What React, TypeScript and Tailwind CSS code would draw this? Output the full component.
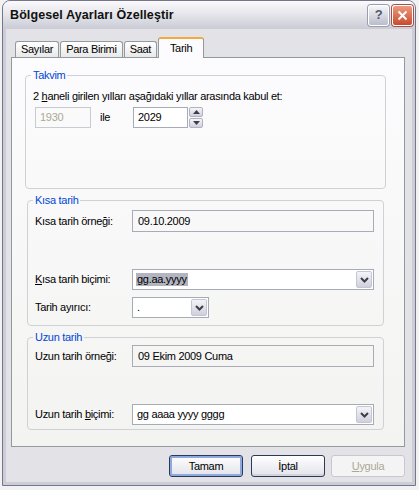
const tabs = ['Sayılar', 'Para Birimi', 'Saat'];

function Chevron() {
  return (
    <svg width="9" height="6" viewBox="0 0 9 6">
      <polyline points="1,1 4.5,4.5 8,1" fill="none" stroke="#3e3e4a" strokeWidth="2" />
    </svg>
  );
}

function Combo({ width, children }: { width: string; children: React.ReactNode }) {
  return (
    <div className={`${width} flex h-[21px] items-stretch border border-[#a5acb5] bg-white p-[1px]`}>
      <div className="flex flex-1 items-center pl-[2px]">{children}</div>
      <div className="flex w-[16px] items-center justify-center rounded-[2px] border border-[#c4c6d4] bg-gradient-to-b from-[#f4f4f8] to-[#cfd0dc]">
        <Chevron />
      </div>
    </div>
  );
}

function Group({ title, className, children }: { title: string; className: string; children: React.ReactNode }) {
  return (
    <fieldset className={`${className} rounded-[4px] border border-[#d0d0d6] px-[7px]`}>
      <legend className="ml-[-2px] px-[2px] leading-[13px] text-[#0046d5]">{title}</legend>
      {children}
    </fieldset>
  );
}

function Btn({ label, variant }: { label: React.ReactNode; variant: 'default' | 'normal' | 'disabled' }) {
  const cls =
    variant === 'disabled'
      ? 'border-[#c9c8ce] bg-[#f4f4f4] text-[#aca899]'
      : variant === 'default'
      ? 'border-[#2a3a58] bg-gradient-to-b from-[#ffffff] to-[#e2e3ea] text-black shadow-[inset_0_0_0_2px_#8fa8e0]'
      : 'border-[#2a3a58] bg-gradient-to-b from-[#ffffff] to-[#e2e3ea] text-black shadow-[inset_0_-2px_0_#d2d3dc]';
  return (
    <button className={`flex h-[22px] w-[74px] items-center justify-center rounded-[3px] border ${cls}`}>
      {label}
    </button>
  );
}

export default function App() {
  return (
    <div className="h-[490px] w-[419px] bg-[#f2f2f2] pl-[2px] font-['Liberation_Sans',Arial,sans-serif] text-[11px] tracking-[-0.3px] text-black">
      <div className="flex h-[486px] w-[414px] flex-col overflow-hidden rounded-t-[8px] border border-[#76768a] bg-[#cdcdd8]">
        {/* title bar */}
        <div className="flex h-[28px] items-center bg-gradient-to-b from-[#fbfbfd] via-[#e4e4ea] to-[#cbcbd6] pl-[7px] pr-[2px]">
          <span className="flex-1 text-[12.5px] font-bold tracking-[0.1px] text-[#111]">Bölgesel Ayarları Özelleştir</span>
          <div className="flex h-[21px] w-[21px] items-center justify-center rounded-[3px] border border-white bg-gradient-to-b from-[#f6f6fa] to-[#b9bccb] text-[13px] font-bold text-[#55586a] shadow-[0_0_0_1px_#9a9cb0]">
            ?
          </div>
          <div className="ml-[3px] flex h-[21px] w-[21px] items-center justify-center rounded-[3px] border border-white bg-gradient-to-b from-[#ec9a7e] to-[#c9482c] shadow-[0_0_0_1px_#a4504a]">
            <svg width="11" height="11" viewBox="0 0 11 11">
              <path d="M1.5 1.5 L9.5 9.5 M9.5 1.5 L1.5 9.5" stroke="white" strokeWidth="2" />
            </svg>
          </div>
        </div>

        {/* client */}
        <div className="mx-[3px] mb-[3px] flex-1 bg-[#e3e2e7] pt-[8px]">
          <div className="ml-[5px] w-[394px]">
            {/* tabs */}
            <div className="relative z-10 flex h-[20px] items-end pl-[4px]">
              {tabs.map((t) => (
                <div
                  key={t}
                  className="mr-[1px] flex h-[16px] items-center rounded-t-[3px] border border-b-0 border-[#919b9c] bg-gradient-to-b from-[#ffffff] to-[#e9e9ea] px-[5px]"
                >
                  {t}
                </div>
              ))}
              <div className="mb-[-1px] flex h-[21px] w-[46px] items-start justify-center rounded-t-[3px] border border-b-0 border-[#919b9c] border-t-[2px] border-t-[#f2aa3c] bg-[#fcfcfe] pt-[1px]">
                Tarih
              </div>
            </div>

            {/* panel */}
            <div className="h-[390px] border border-[#919b9c] bg-gradient-to-b from-[#fcfcfe] to-[#f3f3f1]">
              <Group title="Takvim" className="ml-[13px] mt-[11px] h-[120px] w-[361px]">
                <div className="mt-[8px] leading-[13px]">
                  2 <span className="underline">h</span>aneli girilen yılları aşağıdaki yıllar arasında kabul et:
                </div>
                <div className="mt-[4px] flex h-[21px] items-stretch pl-[2px]">
                  <div className="flex w-[56px] items-center border border-[#c9cbd3] bg-[#fafafa] pl-[4px] text-[#aca899]">1930</div>
                  <span className="flex w-[42px] items-center pl-[9px]">ile</span>
                  <div className="flex w-[55px] items-center border border-[#a5acb5] bg-white pl-[4px]">2029</div>
                  <div className="ml-[1px] flex w-[14px] flex-col gap-[1px]">
                    <div className="flex flex-1 items-center justify-center rounded-[2px] border border-[#b0b2c2] bg-gradient-to-b from-[#f6f6fa] to-[#cfd0dc]">
                      <svg width="7" height="4" viewBox="0 0 7 4"><polygon points="0,4 3.5,0 7,4" fill="#3e3e4a" /></svg>
                    </div>
                    <div className="flex flex-1 items-center justify-center rounded-[2px] border border-[#b0b2c2] bg-gradient-to-b from-[#f6f6fa] to-[#cfd0dc]">
                      <svg width="7" height="4" viewBox="0 0 7 4"><polygon points="0,0 3.5,4 7,0" fill="#3e3e4a" /></svg>
                    </div>
                  </div>
                </div>
              </Group>

              <Group title="Kısa tarih" className="ml-[15px] mt-[5px] h-[132px] w-[357px]">
                <div className="mt-[3px] flex items-center">
                  <span className="w-[97px]">Kısa tarih örneği:</span>
                  <div className="flex h-[22px] w-[242px] items-center border border-[#a9abb6] pl-[5px]">09.10.2009</div>
                </div>
                <div className="mt-[37px] flex items-center">
                  <span className="w-[97px]"><span className="underline">K</span>ısa tarih biçimi:</span>
                  <Combo width="w-[242px]">
                    <span className="bg-[#b2b4bf] px-[1px] leading-[13px]">gg.aa.yyyy</span>
                  </Combo>
                </div>
                <div className="mt-[7px] flex items-center">
                  <span className="w-[97px]">Tarih ayırıcı:</span>
                  <Combo width="w-[77px]">
                    <span className="pl-[1px]">.</span>
                  </Combo>
                </div>
              </Group>

              <Group title="Uzun tarih" className="ml-[15px] mt-[5px] h-[99px] w-[357px]">
                <div className="mt-[1px] flex items-center">
                  <span className="w-[97px]">Uzun tarih örneği:</span>
                  <div className="flex h-[22px] w-[242px] items-center border border-[#a9abb6] pl-[5px]">09 Ekim 2009 Cuma</div>
                </div>
                <div className="mt-[37px] flex items-center">
                  <span className="w-[97px]">Uzun tarih <span className="underline">b</span>içimi:</span>
                  <Combo width="w-[242px]">
                    <span className="pl-[1px]">gg aaaa yyyy gggg</span>
                  </Combo>
                </div>
              </Group>
            </div>

            {/* buttons */}
            <div className="mt-[8px] flex justify-end">
              <Btn label="Tamam" variant="default" />
              <div className="w-[8px]" />
              <Btn label="İptal" variant="normal" />
              <div className="w-[6px]" />
              <Btn label={<><span className="underline">U</span>ygula</>} variant="disabled" />
            </div>
          </div>
        </div>
      </div>
    </div>
  );
}
